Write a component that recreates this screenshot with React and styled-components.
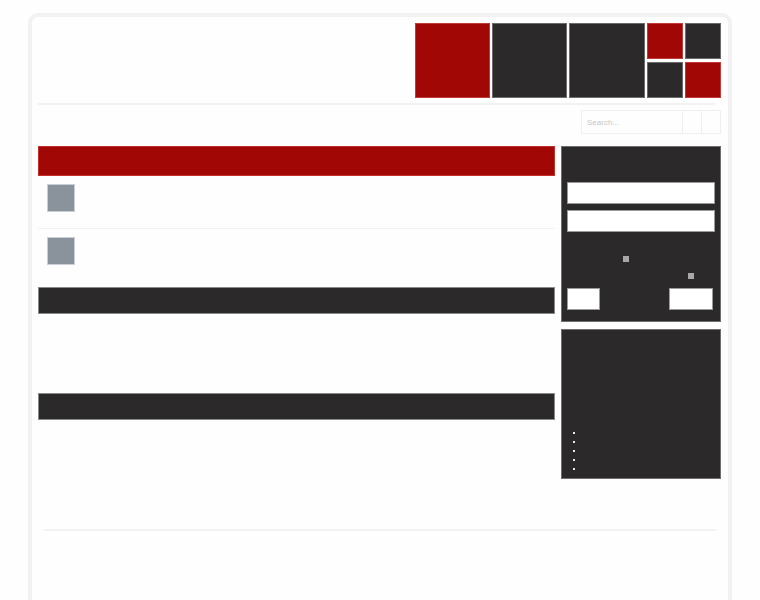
import React from 'react';
import styled, { createGlobalStyle } from 'styled-components';

const GlobalStyle = createGlobalStyle`
  html, body {
    margin: 0;
    padding: 0;
    background: #fefefe;
    font-family: "Liberation Sans", Arial, sans-serif;
  }
`;

const Frame = styled.div`
  box-sizing: border-box;
  width: 704px;
  min-height: 587px;
  margin: 13px 0 0 28px;
  border: 4px solid #f3f2f2;
  border-bottom: none;
  border-radius: 10px 10px 0 0;
  background: #fefefe;
  padding: 6px 7px 0 6px;
`;

const Header = styled.header`
  display: flex;
  justify-content: flex-end;
  height: 75px;
`;

const Tiles = styled.div`
  display: grid;
  grid-template-columns: 75px 75px 76px 36px 36px;
  grid-template-rows: 36px 36px;
  column-gap: 2px;
  row-gap: 3px;
`;

const Tile = styled.div`
  box-sizing: border-box;
  background: ${p => (p.$red ? '#a10705' : '#2b2929')};
  border: 1px solid ${p => (p.$red ? '#c23a36' : '#6a6a6a')};
  grid-row: ${p => (p.$tall ? 'span 2' : 'auto')};
`;

const Divider = styled.div`
  height: 2px;
  margin: 5px 6px 0 0;
  background: #f2f2f2;
`;

const SearchRow = styled.div`
  display: flex;
  justify-content: flex-end;
  margin-top: 5px;
`;

const SearchBox = styled.div`
  display: flex;
  height: 24px;
  border: 1px solid #efefef;
  box-sizing: border-box;
`;

const SearchInput = styled.input`
  width: 100px;
  box-sizing: border-box;
  border: none;
  padding: 0 5px;
  font-family: "Liberation Sans", Arial, sans-serif;
  font-size: 8px;
  color: #999;
  background: transparent;
  outline: none;
  &::placeholder { color: #c8c8c8; }
`;

const SearchButton = styled.div`
  width: 18px;
  border-left: 1px solid #efefef;
`;

const Main = styled.div`
  display: flex;
  gap: 6px;
  margin-top: 12px;
`;

const Content = styled.main`
  width: 517px;
`;

const Bar = styled.div`
  box-sizing: border-box;
  height: ${p => (p.$red ? 30 : 27)}px;
  background: ${p => (p.$red ? '#a10705' : '#2b2929')};
  border: 1px solid ${p => (p.$red ? '#c2302c' : '#8a8a8a')};
`;

const Post = styled.div`
  padding: 8px 9px ${p => p.$pad}px;
  border-bottom: ${p => (p.$line ? '1px solid #f1f1f1' : 'none')};
`;

const Thumb = styled.div`
  box-sizing: border-box;
  width: 28px;
  height: 28px;
  background: #8a939b;
  border: 1px solid #c9ced8;
`;

const Blank = styled.div`
  height: ${p => p.$h}px;
`;

const Sidebar = styled.aside`
  width: 160px;
  display: flex;
  flex-direction: column;
  gap: 7px;
`;

const Widget = styled.div`
  box-sizing: border-box;
  height: ${p => p.$h}px;
  background: #2b2929;
  border: 1px solid #6e6e6e;
  padding: ${p => p.$pad};
`;

const Field = styled.div`
  box-sizing: border-box;
  height: 22px;
  background: #fff;
  border: 1px solid #9a9a9a;
  margin-bottom: 6px;
`;

const Dot = styled.div`
  width: 6px;
  height: 6px;
  background: #a8a8a8;
  margin-left: ${p => p.$x}px;
  margin-top: ${p => p.$y}px;
`;

const Buttons = styled.div`
  display: flex;
  justify-content: space-between;
  margin-top: 9px;
  padding-right: 2px;
`;

const Button = styled.div`
  box-sizing: border-box;
  width: ${p => p.$w}px;
  height: 22px;
  background: #fff;
  border: 1px solid #9a9a9a;
`;

const List = styled.ul`
  margin: 0;
  padding: 0;
  list-style: none;
  display: flex;
  flex-direction: column;
  gap: 7px;
`;

const Bullet = styled.li`
  width: 2px;
  height: 2px;
  background: #e8e8e8;
`;

const Footer = styled.footer`
  height: 2px;
  margin: 50px 5px 0 6px;
  background: #f2f2f2;
`;

export default function App() {
  return (
    <>
      <GlobalStyle />
      <Frame>
        <Header>
          <Tiles>
            <Tile $red $tall />
            <Tile $tall />
            <Tile $tall />
            <Tile $red />
            <Tile />
            <Tile />
            <Tile $red />
          </Tiles>
        </Header>
        <Divider />
        <SearchRow>
          <SearchBox>
            <SearchInput placeholder="Search..." />
            <SearchButton />
            <SearchButton />
          </SearchBox>
        </SearchRow>
        <Main>
          <Content>
            <Bar $red />
            <Post $pad={16} $line>
              <Thumb />
            </Post>
            <Post $pad={22}>
              <Thumb />
            </Post>
            <Bar />
            <Blank $h={79} />
            <Bar />
          </Content>
          <Sidebar>
            <Widget $h={176} $pad="35px 5px 0 5px">
              <Field />
              <Field />
              <Dot $x={56} $y={24} />
              <Dot $x={121} $y={11} />
              <Buttons>
                <Button $w={33} />
                <Button $w={44} />
              </Buttons>
            </Widget>
            <Widget $h={150} $pad="102px 11px 0 11px">
              <List>
                <Bullet />
                <Bullet />
                <Bullet />
                <Bullet />
                <Bullet />
              </List>
            </Widget>
          </Sidebar>
        </Main>
        <Footer />
      </Frame>
    </>
  );
}
